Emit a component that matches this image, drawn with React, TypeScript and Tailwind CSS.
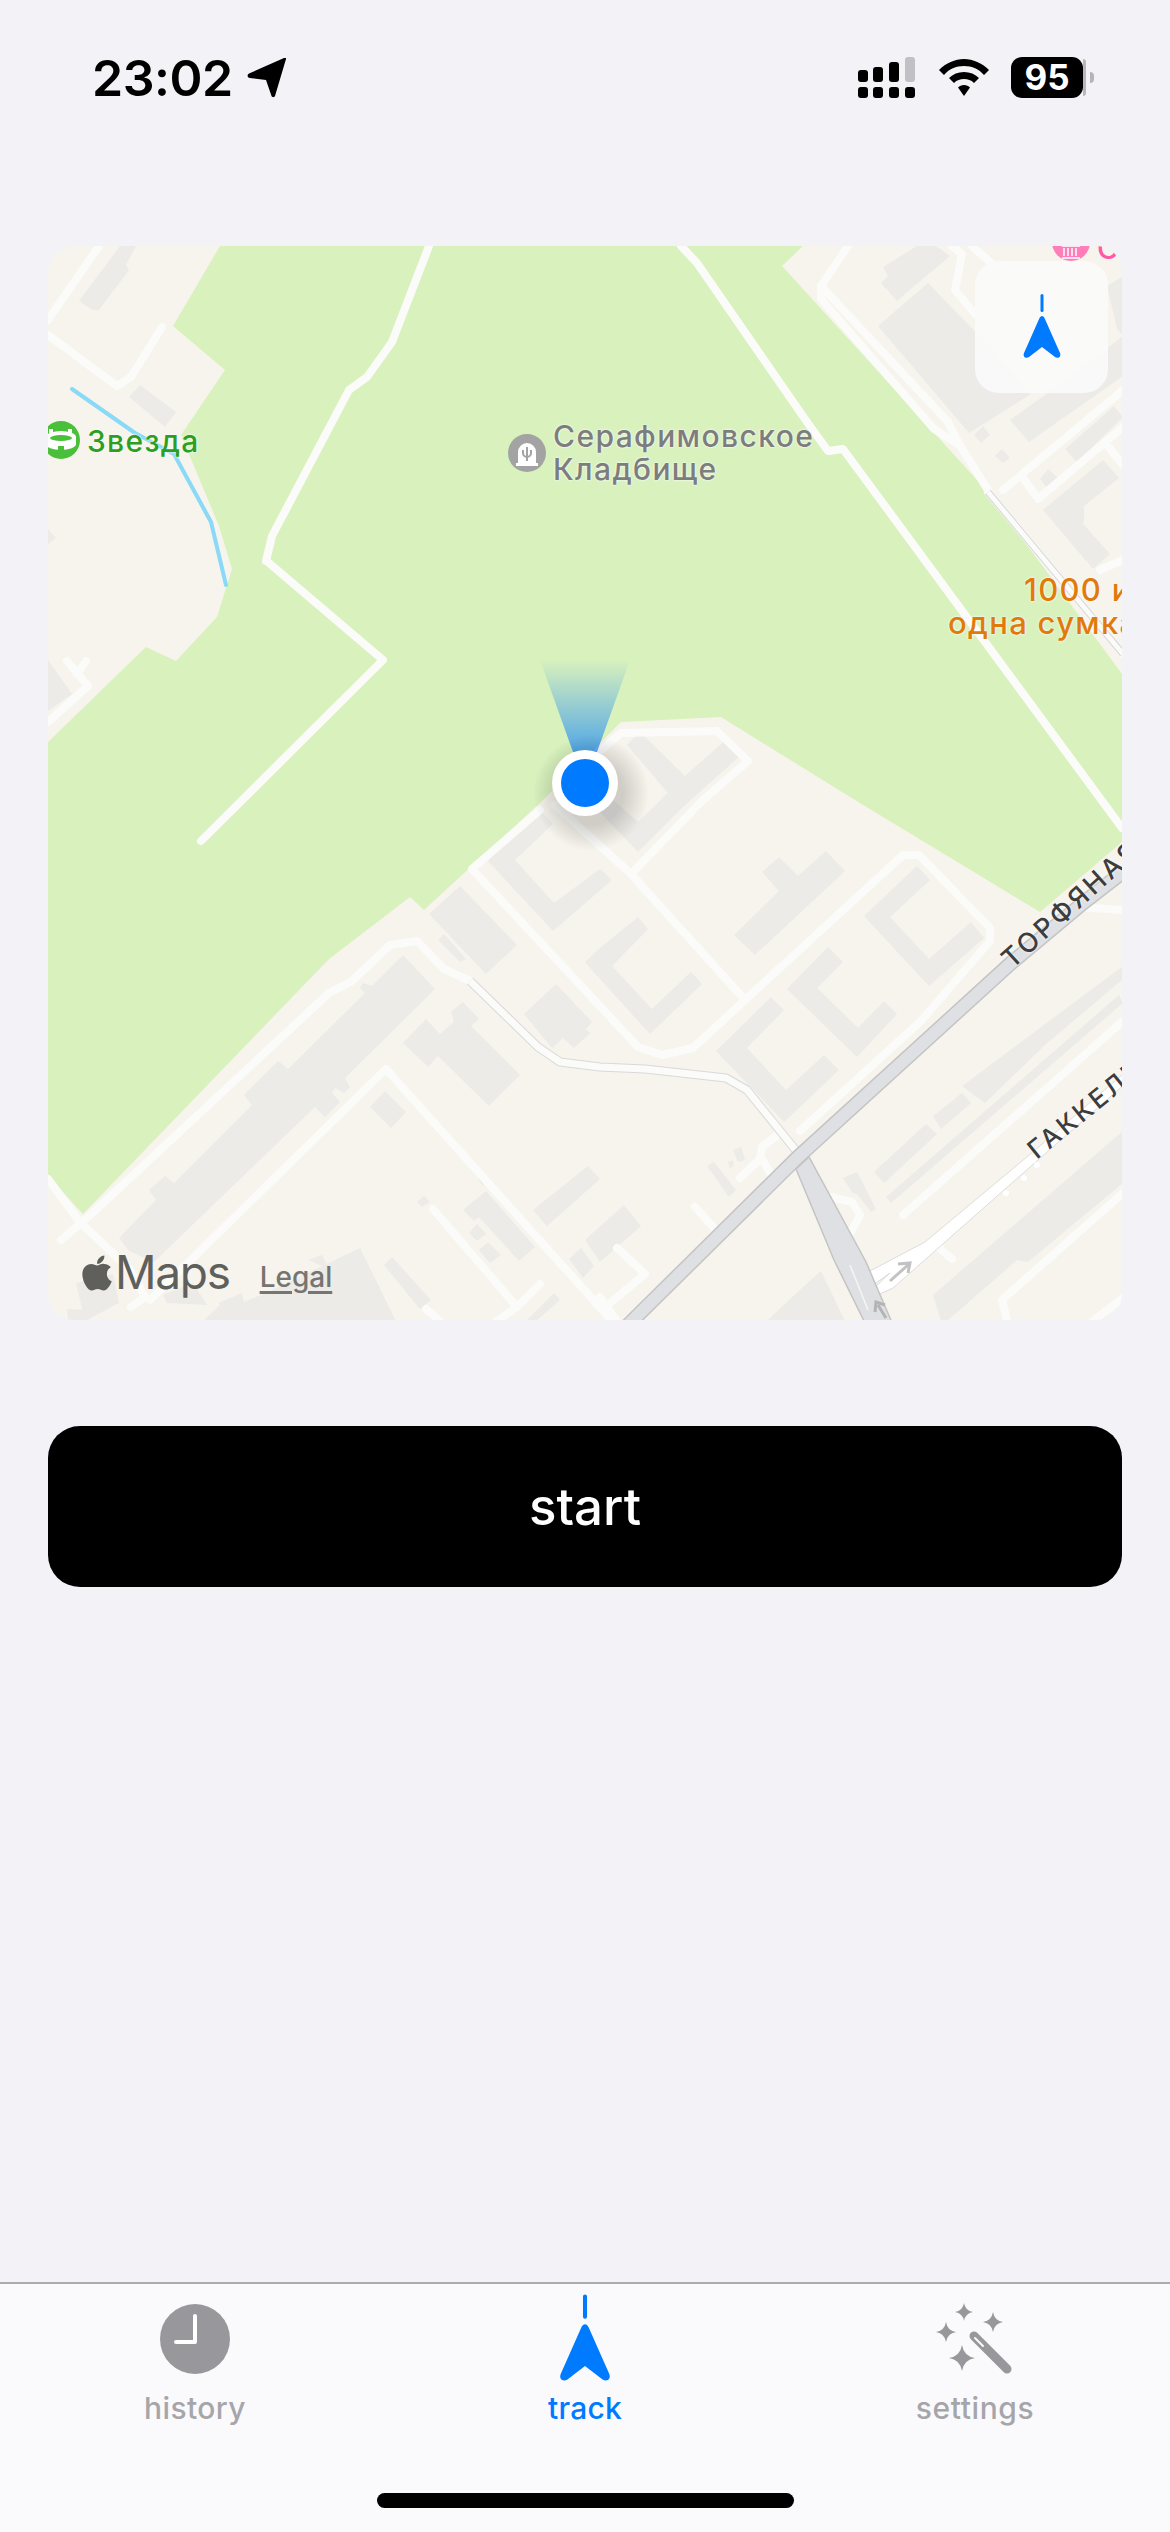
import { FaApple } from "react-icons/fa";

const labelFont = "font-['Inter','Noto_Sans',sans-serif]";

// all map shapes are in page pixels, the svg viewBox starts at the map's corner
const parks = [
  "220,246 173,326 225,370 181,435 219,526 232,569 217,617 176,661 146,647 48,742 48,1176 83,1214 329,959 410,897 424,910 540,803 621,722 721,717 855,800 1040,912 1122,842 1122,674 988,492 782,266 803,246",
];

const buildings = [
  "120,246 136,246 126,265 129,270 99,310 92,310 79,301",
  "140,385 176,412 165,427 129,397",
  "48,529 56,538 48,544",
  "48,660 72,694 48,711",
  "881,283 888,276 883,267 917,246 936,246 950,256 912,288 907,292 897,301",
  "878,326 928,283 990,347 1031,394 969,433",
  "1010,420 1059,385 1123,336 1123,376 1029,442",
  "1107,286 1123,276 1123,336 1117,329",
  "974,435 983,426 990,435 981,443",
  "995,456 1002,449 1010,458 1003,463",
  "1040,479 1048,469 1057,477 1047,488",
  "1043,510 1103,460 1119,478 1084,506 1084,520 1083,524 1110,554 1093,569",
  "1065,449 1114,406 1123,417 1077,462",
  "627,745 640,732 685,776 728,738 742,754 683,807 638,852 600,812 613,800 638,822 668,793",
  "460,886 517,945 486,974 429,914",
  "444,934 466,959 460,962 438,940",
  "486,859 542,812 553,824 515,860 554,903 600,869 612,880 553,931",
  "585,962 600,948 638,917 648,929 612,966 652,1009 691,972 702,984 650,1034 600,979",
  "556,984 592,1022 586,1029 590,1033 574,1048 563,1038 552,1048 524,1014",
  "403,955 372,986 363,983 360,988 365,993 288,1069 278,1061 244,1095 252,1105 174,1183 165,1176 149,1190 156,1200 119,1238 129,1251 154,1262 315,1107 325,1117 340,1102 332,1093 335,1088 344,1093 350,1087 345,1078 435,989",
  "426,1019 440,1034 454,1022 451,1012 463,1002 479,1019 471,1026 520,1075 489,1106 438,1056 428,1067 403,1043",
  "385,1091 406,1112 391,1128 370,1107",
  "483,1176 488,1181 483,1186 478,1179",
  "424,1196 430,1202 422,1207 417,1202",
  "486,1191 535,1247 519,1261 479,1217 474,1221 463,1210",
  "477,1224 486,1234 477,1241 469,1233",
  "488,1242 501,1255 490,1263 479,1250",
  "585,1240 624,1205 641,1226 600,1262",
  "533,1210 588,1166 600,1179 547,1226",
  "569,1259 581,1248 594,1266 583,1278",
  "360,1248 396,1321 203,1321 220,1305 218,1303 242,1293 244,1302 268,1292",
  "308,1260 322,1255 329,1269",
  "163,1295 193,1283 207,1305 167,1303",
  "76,1283 113,1274 119,1303 85,1321",
  "67,1309 85,1310 86,1321 68,1321",
  "392,1257 431,1300 420,1309 384,1265",
  "554,1293 560,1300 536,1321 526,1321",
  "779,857 798,876 826,851 845,871 755,955 734,935 779,891 762,872",
  "828,947 843,962 817,988 858,1028 884,1001 897,1014 857,1057 787,989",
  "917,866 930,880 890,917 929,959 971,922 984,938 929,986 864,916",
  "771,997 784,1010 747,1048 786,1090 824,1055 839,1070 784,1122 716,1051",
  "962,1086 1123,966 1123,979 1045,1045 985,1103",
  "933,1116 962,1093 971,1103 941,1129",
  "874,1172 926,1124 937,1134 884,1183",
  "886,1197 1119,995 1123,1003 891,1203",
  "707,1166 714,1162 736,1190 729,1197",
  "733,1150 741,1147 745,1160 738,1162",
  "728,1162 733,1160 734,1165 730,1169",
  "843,1178 857,1172 876,1209 871,1212 858,1195 852,1192",
  "933,1295 1123,1131 1123,1183 1028,1262 1017,1260 947,1321 941,1321",
  "821,1271 845,1321 767,1321 802,1288",
];

const roads = [
  "429,246 392,342 367,377 349,390 272,536 266,561",
  "269,563 383,660 201,841",
  "162,327 131,377 117,386 48,335",
  "99,246 48,320",
  "67,661 88,686 48,722",
  "86,661 77,674",
  "681,246 697,263 807,422 828,451 843,449 1122,828",
  "821,286 948,422 959,444 988,490",
  "821,286 821,299 934,429 959,445",
  "821,286 848,246",
  "952,246 962,254 955,290 976,315",
  "972,246 993,265",
  "1003,490 1123,390",
  "1024,479 1038,499 1123,427",
  "1107,445 1123,465",
  "988,492 1123,654",
  "600,751 621,733 717,731 748,761 703,800 631,874",
  "555,805 631,874 745,1000 693,1048 662,1055 638,1047 472,869 540,810",
  "745,1000 903,855 919,855 990,928 990,941 921,1021 800,1131",
  "61,1240 88,1217 329,993 352,981 390,945 417,941 444,969 470,981",
  "48,1179 80,1222 130,1270 145,1297 131,1307",
  "150,1300 386,1069 612,1321",
  "433,1209 517,1307 540,1284",
  "517,1307 497,1321",
  "426,1309 440,1321",
  "903,1215 1123,1021",
  "831,1197 852,1202 860,1215 850,1234",
  "938,1247 952,1259",
  "740,1178 760,1159 762,1147 776,1136",
  "762,1159 772,1176",
  "695,1207 714,1228",
  "617,1248 645,1274 610,1303",
  "600,1297 617,1321",
  "1007,1321 1002,1300 1123,1193",
  "1093,1321 1123,1298",
  "1079,907 1122,910",
  "1100,570 1123,560",
];

function MapLayer() {
  return (
    <svg viewBox="48 246 1074 1074" className="block h-full w-full">
      <defs>
        <linearGradient id="cone" x1="0" y1="0" x2="0" y2="1">
          <stop offset="0" stopColor="#007aff" stopOpacity="0" />
          <stop offset="1" stopColor="#007aff" stopOpacity="0.62" />
        </linearGradient>
        <radialGradient id="dotShadow">
          <stop offset="0.55" stopColor="#000" stopOpacity="0.16" />
          <stop offset="1" stopColor="#000" stopOpacity="0" />
        </radialGradient>
      </defs>
      <rect x="48" y="246" width="1074" height="1074" fill="#f6f4ec" />
      {parks.map((p) => (
        <polygon key={p} points={p} fill="#d8f1bd" />
      ))}
      {buildings.map((p) => (
        <polygon key={p} points={p} fill="#ecebe8" />
      ))}
      <polyline points="72,389 135,433 174,454 211,522 226,585" fill="none" stroke="#8ad9f7" strokeWidth="4" strokeLinecap="round" strokeLinejoin="round" />
      {roads.map((p) => (
        <polyline key={p} points={p} fill="none" stroke="#fbfbf9" strokeWidth="8" strokeLinecap="round" strokeLinejoin="round" />
      ))}
      {/* thin service road with a grey edge */}
      <polyline points="470,981 538,1047 560,1062 600,1067 645,1069 726,1078 747,1090 798,1153" fill="none" stroke="#d9d9d9" strokeWidth="9" strokeLinejoin="round" />
      <polyline points="470,981 538,1047 560,1062 600,1067 645,1069 726,1078 747,1090 798,1153" fill="none" stroke="#fbfbfa" strokeWidth="7" strokeLinejoin="round" />
      <polyline points="988,492 1123,654" fill="none" stroke="#d6d6d6" strokeWidth="7" />
      <polyline points="988,492 1123,654" fill="none" stroke="#fbfbfa" strokeWidth="5" />

      {/* Гаккелевская */}
      <polygon points="1130,1068 1034,1151 925,1242 868,1272 873,1285 890,1273 872,1290 878,1295 893,1288 1038,1160 1134,1076" fill="#ffffff" stroke="#dcdcdc" strokeWidth="1" />
      <circle cx="1037" cy="1165" r="3" fill="#ffffff" />
      <circle cx="1024" cy="1178" r="3" fill="#ffffff" />
      <circle cx="1006" cy="1193" r="3" fill="#ffffff" />

      {/* highways */}
      <polyline points="628,1325 798,1157 1010,964 1083,903 1123,872" fill="none" stroke="#c4c4c4" strokeWidth="15" />
      <polyline points="628,1325 798,1157 1010,964 1083,903 1123,872" fill="none" stroke="#dfe0e4" strokeWidth="12" />
      <polygon points="796,1169 809,1157 866,1262 893,1325 866,1325 834,1260" fill="#dfe0e4" stroke="#c4c4c4" strokeWidth="1.5" />
      <polyline points="850,1265 868,1310" fill="none" stroke="#f5f5f5" strokeWidth="1.5" />
      <path d="M890,1281 L908,1265 M898,1264 L910,1263 L908,1273" fill="none" stroke="#c2c2c2" strokeWidth="3" />
      <path d="M886,1318 L878,1305 M875,1312 L876,1302 L885,1305" fill="none" stroke="#b4b4b4" strokeWidth="3" />

      {/* heading cone and user dot */}
      <polygon points="540,660 630,660 597,752 573,752" fill="url(#cone)" />
      <circle cx="591" cy="793" r="58" fill="url(#dotShadow)" />
      <circle cx="585" cy="783" r="33" fill="#ffffff" />
      <circle cx="585" cy="783" r="24" fill="#007aff" />

      {/* poi badges */}
      <circle cx="61" cy="440" r="19" fill="#4abf3a" />
      <path d="M46,437 a15,6 0 0 1 30,0 v7 a15,6 0 0 1 -30,0 z" fill="#ffffff" />
      <ellipse cx="61" cy="438" rx="11" ry="3" fill="#4abf3a" />
      <rect x="49" y="429" width="4" height="5" fill="#ffffff" />
      <rect x="68" y="429" width="4" height="5" fill="#ffffff" />
      <rect x="58" y="446" width="6" height="6" fill="#4abf3a" />
      <circle cx="527" cy="453" r="19" fill="#a3a3a3" />
      <path d="M518,463 v-11 a9,9 0 0 1 18,0 v11 h2 v3 h-22 v-3 z" fill="#ffffff" />
      <path d="M527,447 v14 M523,450 v3 a4,4 0 0 0 8,0 v-3" fill="none" stroke="#a3a3a3" strokeWidth="2" />
      <circle cx="1071" cy="242" r="19" fill="#ff7db8" />
      <path d="M1062,246 h18 M1064,248 v8 M1068,248 v8 M1072,248 v8 M1076,248 v8 M1062,258 h18" stroke="#ffffff" strokeWidth="1.5" fill="none" />
    </svg>
  );
}

function NavArrow({ className }: { className?: string }) {
  return (
    <svg viewBox="0 0 40 66" className={className}>
      <rect x="18.5" y="0" width="3" height="18" rx="1.5" fill="#007aff" />
      <path d="M20 22 C21 22 22 23 22.5 24 L38 59 C39.5 63 36 65 33 63 L20 53 L7 63 C4 65 .5 63 2 59 L17.5 24 C18 23 19 22 20 22 Z" fill="#007aff" />
    </svg>
  );
}

function Sparkle({ cx, cy, r }: { cx: number; cy: number; r: number }) {
  const k = r * 0.14;
  return (
    <path
      d={`M${cx} ${cy - r} Q${cx + k} ${cy - k} ${cx + r} ${cy} Q${cx + k} ${cy + k} ${cx} ${cy + r} Q${cx - k} ${cy + k} ${cx - r} ${cy} Q${cx - k} ${cy - k} ${cx} ${cy - r} Z`}
      fill="#98989c"
    />
  );
}

function StatusBar() {
  return (
    <div className="flex h-[156px] items-start justify-between pl-[92px] pr-[76px] pt-[57px]">
      <div className="flex items-center gap-[14px]">
        <span className={`${labelFont} text-[50px] font-semibold leading-[42px] tracking-[-0.5px] text-black`}>23:02</span>
        <svg viewBox="0 0 40 40" className="h-[40px] w-[40px]">
          <path d="M39 1 L28 38 C27.5 39.5 25 39.5 24.5 38 L19 22 L3 20 C0 19.500 0 16.500 2 15.500 L37 0 C38.500 -.5 39.500 0 39 1 Z" fill="#000" />
        </svg>
      </div>
      <div className="flex items-start">
        <svg viewBox="0 0 58 42" className="h-[42px] w-[58px]">
          <rect x="0" y="13" width="10" height="12" rx="3" fill="#000" />
          <rect x="15" y="10" width="10" height="15" rx="3" fill="#000" />
          <rect x="31" y="5" width="10" height="20" rx="3" fill="#000" />
          <rect x="47" y="0" width="10" height="25" rx="3" fill="#c1c1c5" />
          <rect x="0" y="30" width="10" height="11" rx="3" fill="#000" />
          <rect x="15" y="30" width="10" height="11" rx="3" fill="#000" />
          <rect x="31" y="30" width="10" height="11" rx="3" fill="#000" />
          <rect x="47" y="30" width="10" height="11" rx="3" fill="#000" />
        </svg>
        <svg viewBox="0 0 50 38" className="ml-[23px] mt-[2px] h-[38px] w-[50px]">
          <path d="M25 0 C34 0 43 4 50 11 L45 16 C40 10 33 7 25 7 C17 7 10 10 5 16 L0 11 C7 4 16 0 25 0 Z" fill="#000" />
          <path d="M25 13 C31 13 36 15 40 19 L35 24 C32 21 29 20 25 20 C21 20 18 21 15 24 L10 19 C14 15 19 13 25 13 Z" fill="#000" />
          <path d="M25 26 C27.500 26 29.500 27 31 28.500 L25 37 L19 28.500 C20.500 27 22.500 26 25 26 Z" fill="#000" />
        </svg>
        <div className="ml-[22px] flex items-center">
          <div className={`${labelFont} flex h-[41px] w-[72px] items-center justify-center rounded-[11px] bg-black text-[35px] font-bold leading-none text-white`}>95</div>
          <div className="h-[37px] w-[3px] rounded-r-[3px] bg-[#b8b8bc]" />
          <div className="ml-[4px] h-[11px] w-[4px] rounded-r-[4px] bg-[#b5b5b5]" />
        </div>
      </div>
    </div>
  );
}

function TrackMap() {
  const halo = "[text-shadow:0_0_3px_#ffffffcc,0_0_2px_#ffffffcc]";
  return (
    <div className={`${labelFont} relative h-[1074px] w-full overflow-hidden rounded-[26px]`}>
      <MapLayer />

      <span className={`absolute left-[39px] top-[178px] text-[30px] font-medium leading-[34px] tracking-[1.3px] text-[#2ba020] ${halo}`}>Звезда</span>
      <span className={`absolute left-[505px] top-[174px] text-[30px] font-medium leading-[33px] tracking-[1.4px] text-[#7d7d7d] ${halo}`}>
        Серафимовское
        <br />
        Кладбище
      </span>
      <span className={`absolute left-[976px] top-[327px] whitespace-nowrap text-[31px] font-medium leading-[34px] tracking-[1.3px] text-[#e07b0b] ${halo}`}>1000 и</span>
      <span className={`absolute left-[900px] top-[360px] whitespace-nowrap text-[31px] font-medium leading-[34px] tracking-[1.3px] text-[#e07b0b] ${halo}`}>одна сумка</span>
      <span className="absolute left-[1049px] top-[-15px] text-[30px] font-medium leading-[34px] text-[#ff5aa5]">С</span>

      <span className="absolute left-[958px] top-[705px] origin-left -rotate-[42deg] whitespace-nowrap text-[27px] font-medium leading-[24px] tracking-[3px] text-[#3d3d3d] [text-shadow:0_0_3px_#fff]">ТОРФЯНАЯ</span>
      <span className="absolute left-[983px] top-[895px] origin-left -rotate-[39deg] whitespace-nowrap text-[26px] font-medium leading-[24px] tracking-[3px] text-[#3d3d3d] [text-shadow:0_0_3px_#fff]">ГАККЕЛЕВСКАЯ</span>

      <div className="absolute right-[14px] top-[15px] flex h-[132px] w-[133px] items-center justify-center rounded-[24px] bg-[#fafafa]/95">
        <NavArrow className="h-[66px] w-[40px]" />
      </div>

      <div className="absolute bottom-[23px] left-[31px] flex items-end">
        <FaApple className="mb-[4px] h-[40px] w-[36px] text-[#5f5f5c]" />
        <span className="text-[46px] font-normal leading-[50px] tracking-[-1.3px] text-[#5f5f5c]">Maps</span>
        <span className="mb-[5px] ml-[30px] text-[28px] font-medium leading-[30px] text-[#757571] underline decoration-[3px] underline-offset-[4px]">Legal</span>
      </div>
    </div>
  );
}

function TabBar() {
  return (
    <div className={`${labelFont} relative h-[250px] border-t-2 border-[#ababae] bg-[#fafafc]`}>
      <div className="grid grid-cols-3 pt-[10px]">
        <div className="flex flex-col items-center">
          <svg viewBox="0 0 90 90" className="h-[90px] w-[90px]">
            <circle cx="45" cy="45" r="35" fill="#98989c" />
            <path d="M45 22 V48 H26" fill="none" stroke="#ffffff" strokeWidth="4" strokeLinecap="round" strokeLinejoin="round" />
          </svg>
          <span className="mt-[6px] text-[30px] font-medium leading-[36px] tracking-[0.4px] text-[#a6a6aa]">history</span>
        </div>
        <div className="flex flex-col items-center">
          <NavArrow className="h-[90px] w-[54px]" />
          <span className="mt-[6px] text-[30px] font-medium leading-[36px] tracking-[0.2px] text-[#007aff]">track</span>
        </div>
        <div className="flex flex-col items-center">
          <svg viewBox="0 0 90 90" className="h-[90px] w-[90px]">
            <Sparkle cx={34} cy={18} r={9} />
            <Sparkle cx={63} cy={28} r={10} />
            <Sparkle cx={16} cy={38} r={10} />
            <Sparkle cx={32} cy={64} r={13} />
            <path d="M44 42 L77 75" stroke="#98989c" strokeWidth="9" strokeLinecap="round" />
            <path d="M45 44 L53 52" stroke="#fafafc" strokeWidth="2" strokeLinecap="round" />
          </svg>
          <span className="mt-[6px] text-[30px] font-medium leading-[36px] tracking-[0.6px] text-[#a6a6aa]">settings</span>
        </div>
      </div>
      <div className="absolute bottom-[24px] left-[377px] h-[15px] w-[417px] rounded-full bg-black" />
    </div>
  );
}

export default function App() {
  return (
    <div className="flex h-[2532px] w-[1170px] flex-col overflow-hidden bg-[#f2f2f7]">
      <StatusBar />
      <div className="mt-[90px] flex-1 px-12">
        <TrackMap />
        <button className={`${labelFont} mt-[106px] flex h-[161px] w-full items-center justify-center rounded-[32px] bg-black pt-[2px] text-[51px] font-medium text-white`}>
          start
        </button>
      </div>
      <TabBar />
    </div>
  );
}
